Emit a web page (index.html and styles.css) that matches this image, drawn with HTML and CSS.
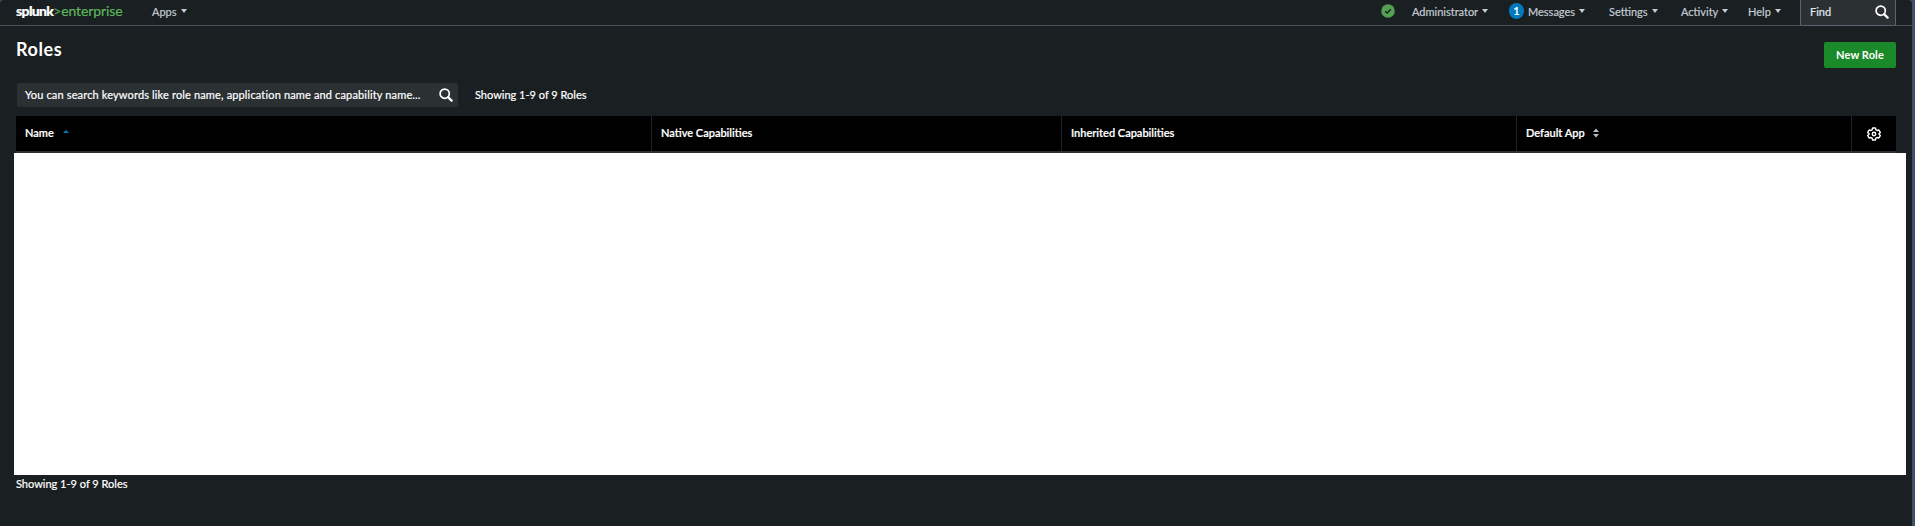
FILE: index.html
```html
<!DOCTYPE html>
<html lang="en">
<head>
<meta charset="utf-8">
<title>Roles</title>
<link rel="stylesheet" href="styles.css">
</head>
<body>
<div class="window">
  <header class="topbar">
    <div class="brand"><span class="brand-name">splunk</span><span class="brand-gt">&gt;</span><span class="brand-product">enterprise</span></div>
    <nav class="menu menu-apps"><span>Apps</span><i class="caret"></i></nav>
    <div class="spacer"></div>
    <svg class="health" viewBox="0 0 14 14"><circle cx="7" cy="7" r="6.8" fill="#53a051"/><path d="M4.2 7.2l2 1.9 3.600-3.900" fill="none" stroke="#171d21" stroke-width="1.4"/></svg>
    <nav class="menu menu-admin"><span>Administrator</span><i class="caret"></i></nav>
    <nav class="menu menu-messages"><b class="badge">1</b><span>Messages</span><i class="caret"></i></nav>
    <nav class="menu menu-settings"><span>Settings</span><i class="caret"></i></nav>
    <nav class="menu menu-activity"><span>Activity</span><i class="caret"></i></nav>
    <nav class="menu menu-help"><span>Help</span><i class="caret"></i></nav>
    <div class="find"><span>Find</span>
      <svg class="lens" viewBox="0 0 14 14"><circle cx="5.7" cy="5.7" r="4.6" fill="none" stroke="#fff" stroke-width="1.7"/><path d="M9 9.2l3.6 3.4" stroke="#fff" stroke-width="2.3" stroke-linecap="round"/></svg>
    </div>
  </header>
  <main class="page">
    <div class="heading"><h1>Roles</h1><button class="new-role">New Role</button></div>
    <div class="filters">
      <div class="search"><span>You can search keywords like role name, application name and capability name...</span>
        <svg class="lens" viewBox="0 0 14 14"><circle cx="5.7" cy="5.7" r="4.6" fill="none" stroke="#fff" stroke-width="1.7"/><path d="M9 9.2l3.6 3.4" stroke="#fff" stroke-width="2.3" stroke-linecap="round"/></svg>
      </div>
      <span class="count">Showing 1-9 of 9 Roles</span>
    </div>
    <div class="thead">
      <div class="th"><span>Name</span><i class="sort-up"></i></div>
      <div class="th"><span>Native Capabilities</span></div>
      <div class="th"><span>Inherited Capabilities</span></div>
      <div class="th"><span>Default App</span>
        <svg class="sort" viewBox="0 0 6 10"><path d="M0 4L3 0.5 6 4zM0 6h6L3 9.5z" fill="#b5bac0"/></svg></div>
      <div class="th th-gear">
        <svg class="gear" viewBox="0 0 14 14" fill="none" stroke="#fff" stroke-width="1.4" stroke-linejoin="round"><path d="M5.6 1h2.8l.5 1.800 1.200.7 1.800-.5 1.400 2.400L12 6.700v.6l1.300 1.300-1.400 2.400-1.800-.5-1.200.7-.5 1.800H5.600l-.5-1.800-1.200-.7-1.800.5L.7 8.600 2 7.300v-.6L.7 5.400 2.100 3l1.800.5 1.200-.7z"/><circle cx="7" cy="7" r="1.700"/></svg></div>
    </div>
    <div class="rows"></div>
    <div class="footer-count"><span class="count">Showing 1-9 of 9 Roles</span></div>
  </main>
</div>
</body>
</html>
```
FILE: styles.css
```css
* { box-sizing: border-box; }
body {
  margin: 0;
  height: 526px;
  overflow: hidden;
  background: #40506a;
  font-family: Lato, "Open Sans", sans-serif;
  font-size: 11px;
  color: #fff;
}
.window {
  width: 1912px;
  height: 526px;
  background: #1a1f22;
  border-radius: 4px 4px 0 0;
  overflow: hidden;
}
.topbar {
  display: flex;
  height: 26px;
  padding-right: 16px;
  border-bottom: 1px solid #4b5057;
  color: #c3cbd4;
  white-space: nowrap;
}
.topbar span, .count, .search span, .th span { -webkit-text-stroke: 0.2px currentColor; }
.brand {
  width: 136px;
  margin-left: 16px;
  font-size: 14px;
  line-height: 21px;
}
.brand-name { color: #fff; font-weight: 900; letter-spacing: -0.65px; }
.brand-gt { color: #53a051; letter-spacing: -0.3px; }
.brand-product { color: #5cb85c; letter-spacing: -0.1px; }
.spacer { flex: 1; }
.menu { display: flex; align-items: center; height: 22px; }
.caret {
  margin-left: 4px;
  border: 3px solid transparent;
  border-top: 4px solid #c3cbd4;
  border-bottom: 0;
}
.health { width: 14px; height: 14px; margin: 4px 17px 0 0; }
.menu-admin { width: 97px; }
.menu-messages { width: 100px; }
.menu-settings { width: 72px; }
.menu-activity { width: 67px; }
.menu-help { width: 52px; }
.badge {
  width: 15px;
  height: 16px;
  margin-right: 4px;
  border-radius: 8px;
  background: #007abd;
  color: #fff;
  line-height: 16px;
  text-align: center;
}
.find {
  display: flex;
  width: 96px;
  height: 26px;
  padding: 0 6px 0 9px;
  justify-content: space-between;
  align-items: center;
  background: #2b3033;
  border: 1px solid #5c6370;
  border-top: 0;
  color: #e1e6eb;
}
.find span { padding-bottom: 3px; }
.find .lens { margin-bottom: 1px; }
.lens { width: 14px; height: 14px; }
.page { padding: 0 16px; }
.heading { display: flex; justify-content: space-between; height: 57px; }
h1 { margin: 11px 0 0; font-size: 18px; line-height: 24px; font-weight: 700; letter-spacing: 0.6px; }
.new-role {
  width: 72px;
  height: 26px;
  margin-top: 16px;
  padding: 0 0 2px;
  border: 0;
  border-radius: 2px;
  background: #1a8929;
  color: #fff;
  font: 700 11px Lato, sans-serif;
  letter-spacing: 0.1px;
}
.filters { display: flex; height: 33px; white-space: nowrap; }
.search {
  display: flex;
  width: 441px;
  height: 24px;
  margin-left: 1px;
  padding: 0 5px 0 8px;
  align-items: center;
  justify-content: space-between;
  border-radius: 2px;
  background: #2b3033;
}
.search span { padding-bottom: 2px; letter-spacing: 0.15px; }
.filters .count { margin: 0 0 0 17px; line-height: 23px; }
.thead {
  display: grid;
  grid-template-columns: 635px 410px 455px 335px 45px;
  height: 37px;
  background: #000;
  border-bottom: 2px solid #2b3033;
}
.th { display: flex; align-items: center; padding: 0 0 2px 9px; }
.th + .th { border-left: 1px solid #1f2327; }
.th span { font-weight: 600; }
.sort-up {
  margin: 0 0 3px 9px;
  border: 3px solid transparent;
  border-bottom: 3px solid #007abd;
  border-top: 0;
}
.sort { width: 6px; height: 10px; margin-left: 8px; }
.th.th-gear { padding: 0; justify-content: center; }
.gear { width: 14px; height: 14px; }
.rows { height: 322px; margin: 0 -10px 0 -2px; background: #fff; }
.footer-count { line-height: 18px; }
```
